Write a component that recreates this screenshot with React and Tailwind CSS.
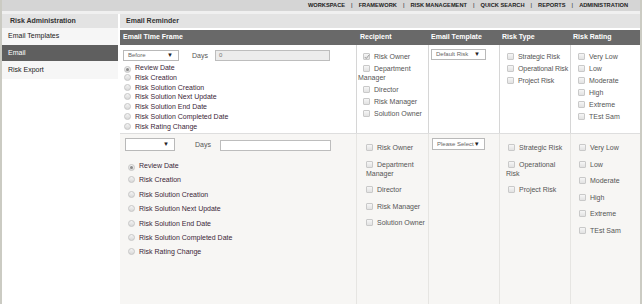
import React from 'react';

const navItems = ["WORKSPACE", "FRAMEWORK", "RISK MANAGEMENT", "QUICK SEARCH", "REPORTS", "ADMINISTRATION"];
const dateOptions = [
    "Review Date", "Risk Creation", "Risk Solution Creation", "Risk Solution Next Update",
    "Risk Solution End Date", "Risk Solution Completed Date", "Risk Rating Change"
];
const ratings = ["Very Low", "Low", "Moderate", "High", "Extreme", "TEst Sam"];

function Box({ checked }) {
    return (
        <span className="relative inline-block align-[-1px] w-[7px] h-[7px] border border-[#c9c9c9] rounded-[1px] bg-gradient-to-b from-[#f6f6f6] to-[#e2e2e2] mr-[4px]">
            {checked && (
                <svg viewBox="0 0 8 8" className="absolute left-0 top-0 w-[6px] h-[6px]">
                    <path d="M1 4 L3 6 L7 1" stroke="#9a9a9a" strokeWidth="1.3" fill="none" />
                </svg>
            )}
        </span>
    );
}

function Radio({ selected }) {
    return (
        <span className="relative inline-flex items-center justify-center align-[-1px] w-[7px] h-[7px] rounded-full border border-[#c6c6c6] bg-gradient-to-b from-[#f4f4f4] to-[#d9d9d9] mr-[4px]">
            {selected && <span className="w-[3px] h-[3px] rounded-full bg-[#8a8a8a]" />}
        </span>
    );
}

function Select({ label, className }) {
    return (
        <div className={`flex items-center justify-between whitespace-nowrap border border-[#b9b9b9] bg-white pl-[4px] pr-[5px] text-[6px] text-[#666] ${className}`}>
            <span>{label}</span>
            <span className="text-[6px] text-[#222]">▼</span>
        </div>
    );
}

export default function App() {
    return (
        <div className="w-[642px] h-[304px] overflow-hidden bg-white border-l-2 border-r-2 border-[#cbcbc3] flex flex-col text-[7px] text-[#444]" style={{ fontFamily: '"Liberation Sans", Arial, sans-serif' }}>
            {/* top nav */}
            <div className="h-[11px] shrink-0 bg-[#d5d5d5] flex items-center justify-end pr-[12px] text-[5.7px] font-bold text-[#222]">
                {navItems.map((item, i) => (
                    <React.Fragment key={item}>
                        {i > 0 && <span className="px-[6px] font-normal text-[6px]">|</span>}
                        <span>{item}</span>
                    </React.Fragment>
                ))}
            </div>
            <div className="h-[3px] shrink-0 bg-[#f0f0f0]" />

            <div className="flex flex-1 min-h-0 gap-[2px]">
                {/* sidebar */}
                <div className="w-[116px] shrink-0 flex flex-col">
                    <div className="h-[14px] bg-[#e3e3e3] flex items-center pl-[8px] font-bold text-[#333]">Risk Administration</div>
                    <div className="h-[17px] bg-[#f6f6f6] flex items-center pl-[6px] text-[#222]">Email Templates</div>
                    <div className="h-[16px] bg-[#5f5f5f] flex items-center pl-[6px] text-white">Email</div>
                    <div className="h-[18px] bg-[#f6f6f6] flex items-center pl-[6px] text-[#222]">Risk Export</div>
                </div>

                {/* main */}
                <div className="flex-1 flex flex-col min-w-0">
                    <div className="h-[14px] shrink-0 bg-[#e3e3e3] flex items-center pl-[6px] font-bold text-[#333]">Email Reminder</div>
                    <div className="h-[2px] shrink-0" />
                    <div className="h-[15px] shrink-0 bg-[#696969] grid grid-cols-[237px_72px_71px_71px_1fr] items-center font-bold text-white">
                        <div className="pl-[3px]">Email Time Frame</div>
                        <div className="pl-[3px]">Recipient</div>
                        <div className="pl-[2px]">Email Template</div>
                        <div className="pl-[2px]">Risk Type</div>
                        <div className="pl-[2px]">Risk Rating</div>
                    </div>

                    {/* row 1 */}
                    <div className="h-[89px] shrink-0 bg-white grid grid-cols-[237px_72px_71px_71px_1fr] leading-[9px] border-b border-[#dedede]">
                        <div className="border-r border-[#d6d6d6] pl-[3px] pt-[5px]">
                            <div className="flex items-center">
                                <Select label="Before" className="w-[56px] h-[11px]" />
                                <span className="ml-[13px] text-[#555]">Days</span>
                                <div className="ml-[7px] w-[115px] h-[11px] border border-[#bdbdbd] bg-[#ececec] pl-[3px] text-[6px] leading-[9px] text-[#777]">0</div>
                            </div>
                            <div className="mt-[2px] text-[#3b2638]">
                                {dateOptions.map((d, i) => (
                                    <div key={d} className="h-[9.8px] leading-[9.8px] pl-[1px] whitespace-nowrap">
                                        <Radio selected={i === 0} />{d}
                                    </div>
                                ))}
                            </div>
                        </div>
                        <div className="border-r border-[#d6d6d6] pl-[1px] pt-[7px] text-[#555]">
                            <div className="mb-[3px]"><span className="ml-[5px]" /><Box checked />Risk Owner</div>
                            <div className="mb-[3px]"><span className="ml-[5px]" /><Box />Department<br />Manager</div>
                            <div className="mb-[3px]"><span className="ml-[5px]" /><Box />Director</div>
                            <div className="mb-[3px]"><span className="ml-[5px]" /><Box />Risk Manager</div>
                            <div className="mb-[3px] whitespace-nowrap"><span className="ml-[5px]" /><Box />Solution Owner</div>
                        </div>
                        <div className="border-r border-[#d6d6d6] pl-[2px] pt-[4px]">
                            <Select label="Default Risk" className="w-[55px] h-[11px]" />
                        </div>
                        <div className="border-r border-[#d6d6d6] pl-[7px] pt-[7px] text-[#555] tracking-[-0.1px]">
                            <div className="mb-[3px] whitespace-nowrap"><Box />Strategic Risk</div>
                            <div className="mb-[3px] whitespace-nowrap"><Box />Operational Risk</div>
                            <div className="mb-[3px] whitespace-nowrap"><Box />Project Risk</div>
                        </div>
                        <div className="pl-[7px] pt-[7px] text-[#555]">
                            {ratings.map(r => (
                                <div key={r} className="mb-[3px] whitespace-nowrap"><Box />{r}</div>
                            ))}
                        </div>
                    </div>

                    {/* row 2 */}
                    <div className="flex-1 bg-[#f7f6f4] grid grid-cols-[237px_72px_71px_71px_1fr] leading-[9px]">
                        <div className="border-r border-[#e6e5e2] pl-[5px] pt-[4px]">
                            <div className="flex items-center">
                                <Select label="" className="w-[50px] h-[13px]" />
                                <span className="ml-[20px] text-[#555]">Days</span>
                                <div className="ml-[9px] w-[111px] h-[11px] mt-[2px] border border-[#bdbdbd] bg-white" />
                            </div>
                            <div className="mt-[10px] pl-[3px] text-[#3b2638]">
                                {dateOptions.map((d, i) => (
                                    <div key={d} className="h-[14.4px] leading-[9px] whitespace-nowrap">
                                        <Radio selected={i === 0} />{d}
                                    </div>
                                ))}
                            </div>
                        </div>
                        <div className="border-r border-[#e6e5e2] pl-[9px] pt-[9px] text-[#555]">
                            <div className="mb-[7.5px]"><Box />Risk Owner</div>
                            <div className="mb-[7.5px]"><Box />Department<br />Manager</div>
                            <div className="mb-[7.5px]"><Box />Director</div>
                            <div className="mb-[7.5px]"><Box />Risk Manager</div>
                            <div className="mb-[7.5px] whitespace-nowrap"><Box />Solution Owner</div>
                        </div>
                        <div className="border-r border-[#e6e5e2] pl-[3px] pt-[4px]">
                            <Select label="Please Select" className="w-[53px] h-[12px] pl-[3px] pr-[3px]" />
                        </div>
                        <div className="border-r border-[#e6e5e2] pl-[6px] pt-[9px] text-[#555]">
                            <div className="mb-[7.5px] whitespace-nowrap"><span className="ml-[2px]" /><Box />Strategic Risk</div>
                            <div className="mb-[7.5px]"><span className="ml-[2px]" /><Box />Operational<br />Risk</div>
                            <div className="mb-[7.5px] whitespace-nowrap"><span className="ml-[2px]" /><Box />Project Risk</div>
                        </div>
                        <div className="pl-[8px] pt-[9px] text-[#555]">
                            {ratings.map(r => (
                                <div key={r} className="mb-[7.6px] whitespace-nowrap"><Box />{r}</div>
                            ))}
                        </div>
                    </div>
                </div>
            </div>
        </div>
    );
}
